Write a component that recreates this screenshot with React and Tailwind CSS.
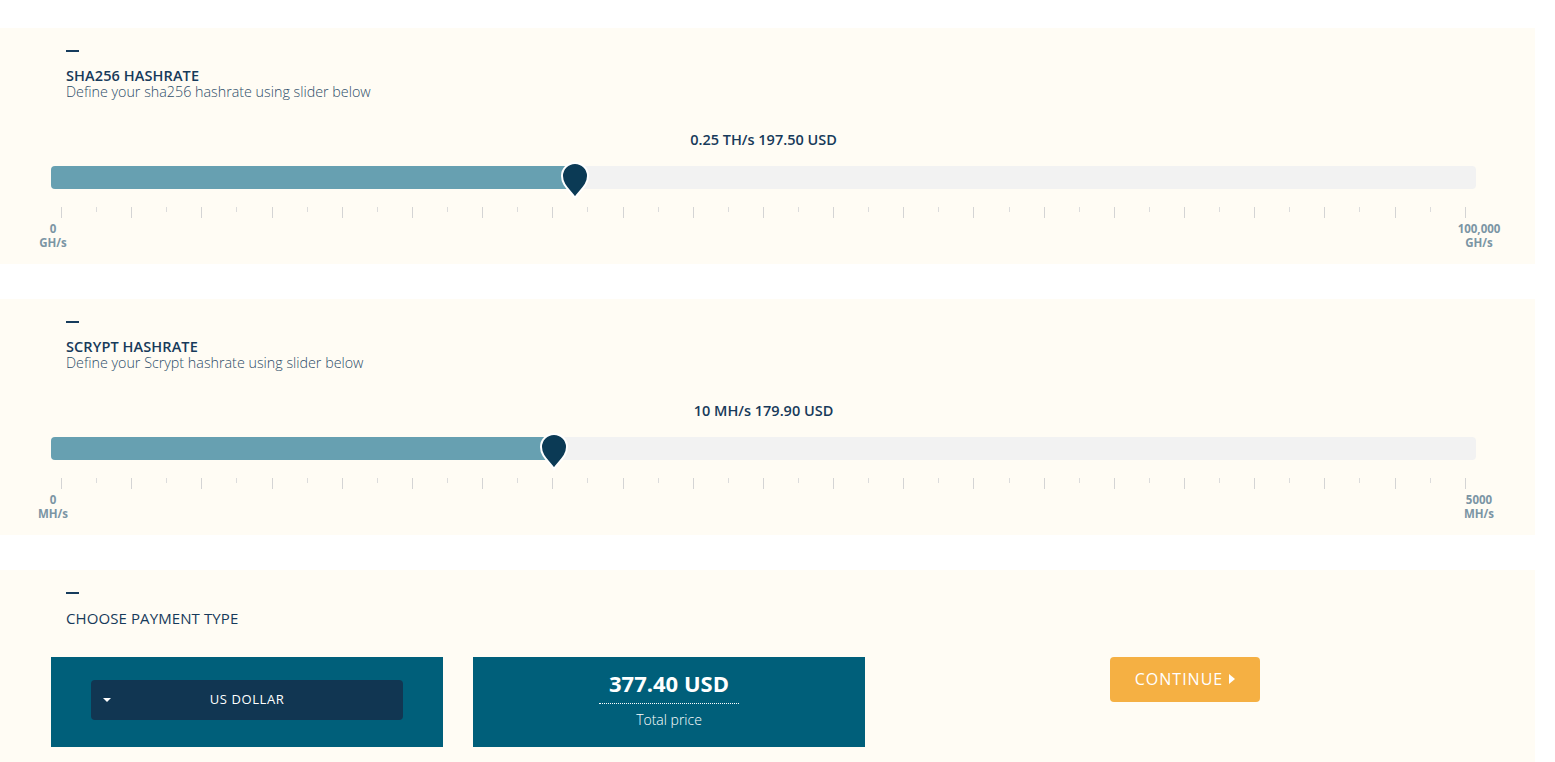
import React from 'react';

const font = { fontFamily: '"Open Sans", "Noto Sans", sans-serif' };

const Pin = () => (
  <svg width="30" height="40" viewBox="0 0 30 40">
    <path
      d="M15 38 C11 31 2 26 2 16 A13 13 0 0 1 28 16 C28 26 19 31 15 38 Z"
      fill="#0b3a55"
      stroke="#ffffff"
      strokeWidth="2"
    />
  </svg>
);

function Ticks() {
  const ticks = [];
  for (let i = 0; i <= 40; i++) {
    ticks.push(
      <div
        key={i}
        className={i % 2 === 0 ? 'w-px h-[11px] bg-[#d4d4d4]' : 'w-px h-[5px] bg-[#dcdcdc]'}
      />
    );
  }
  return <div className="flex justify-between items-start px-[10px] mt-[18px]">{ticks}</div>;
}

function Hashrate({ title, subtitle, value, pct, min, max, unit }) {
  return (
    <section className="bg-[#fffcf4] pl-[51px] pr-[59px] pt-[22px] pb-[14px]">
      <div className="pl-[15px]">
        <div className="w-[13px] h-[2px] bg-[#163c5c]" />
        <h2 className="mt-[16px] text-[14.5px] leading-[16px] font-semibold text-[#173a5a] tracking-[0.1px]">{title}</h2>
        <p className="text-[14.3px] leading-[16px] font-light text-[#2d4d69]">{subtitle}</p>
      </div>
      <div className="mt-[30px] text-center text-[14.5px] leading-[20px] font-semibold text-[#173a5a]">{value}</div>
      <div className="relative mt-[16px] h-[23px] rounded-[4px] bg-[#f2f2f2]">
        <div className="h-full rounded-l-[4px] bg-[#67a0b1]" style={{ width: `${pct}%` }} />
        <div className="absolute top-[-6px] -translate-x-1/2" style={{ left: `${pct}%` }}>
          <Pin />
        </div>
      </div>
      <Ticks />
      <div className="flex justify-between ml-[-28px] mr-[-33px] mt-[4px] text-[11.5px] leading-[14px] font-bold text-[#7b95a4]">
        <div className="w-[60px] text-center">
          <div>{min}</div>
          <div>{unit}</div>
        </div>
        <div className="w-[60px] text-center">
          <div>{max}</div>
          <div>{unit}</div>
        </div>
      </div>
    </section>
  );
}

export default function App() {
  return (
    <div className="bg-white min-h-[762px] pt-[28px]" style={font}>
      <div className="w-[1535px]">
        <Hashrate
          title="SHA256 HASHRATE"
          subtitle="Define your sha256 hashrate using slider below"
          value="0.25 TH/s 197.50 USD"
          pct={36.8}
          min="0"
          max="100,000"
          unit="GH/s"
        />
        <div className="h-[35px]" />
        <Hashrate
          title="SCRYPT HASHRATE"
          subtitle="Define your Scrypt hashrate using slider below"
          value="10 MH/s 179.90 USD"
          pct={35.3}
          min="0"
          max="5000"
          unit="MH/s"
        />
        <div className="h-[35px]" />
        <section className="bg-[#fffcf4] pl-[51px] pt-[22px] pb-[20px]">
          <div className="pl-[15px]">
            <div className="w-[13px] h-[2px] bg-[#163c5c]" />
            <h2 className="mt-[16px] text-[15px] leading-[16px] font-medium text-[#173a5a] tracking-[0.1px]">CHOOSE PAYMENT TYPE</h2>
          </div>
          <div className="mt-[31px] flex items-start">
            <div className="w-[392px] h-[90px] bg-[#005f7a] flex justify-center pt-[23px]">
              <button className="relative w-[312px] h-[40px] rounded-[4px] bg-[#113652] text-white text-[13px] font-medium tracking-[0.6px] flex items-center justify-center">
                <span className="absolute left-[12px] top-[18px] w-0 h-0 border-l-[4px] border-r-[4px] border-t-[4px] border-l-transparent border-r-transparent border-t-white" />
                US DOLLAR
              </button>
            </div>
            <div className="ml-[30px] w-[392px] h-[90px] bg-[#005f7a] flex flex-col items-center pt-[11px] text-white">
              <div className="px-[10px] pb-[5px] border-b border-dotted border-white text-[22px] leading-[30px] font-bold">377.40 USD</div>
              <div className="mt-[7px] text-[14px] leading-[18px] font-light">Total price</div>
            </div>
            <button className="ml-[245px] w-[150px] h-[45px] rounded-[4px] bg-[#f5b043] text-white text-[16px] leading-[20px] tracking-[1px] flex items-center justify-center gap-[6px] pb-[2px]">
              CONTINUE
              <span className="w-0 h-0 border-t-[5px] border-b-[5px] border-l-[6px] border-t-transparent border-b-transparent border-l-white" />
            </button>
          </div>
        </section>
      </div>
    </div>
  );
}
